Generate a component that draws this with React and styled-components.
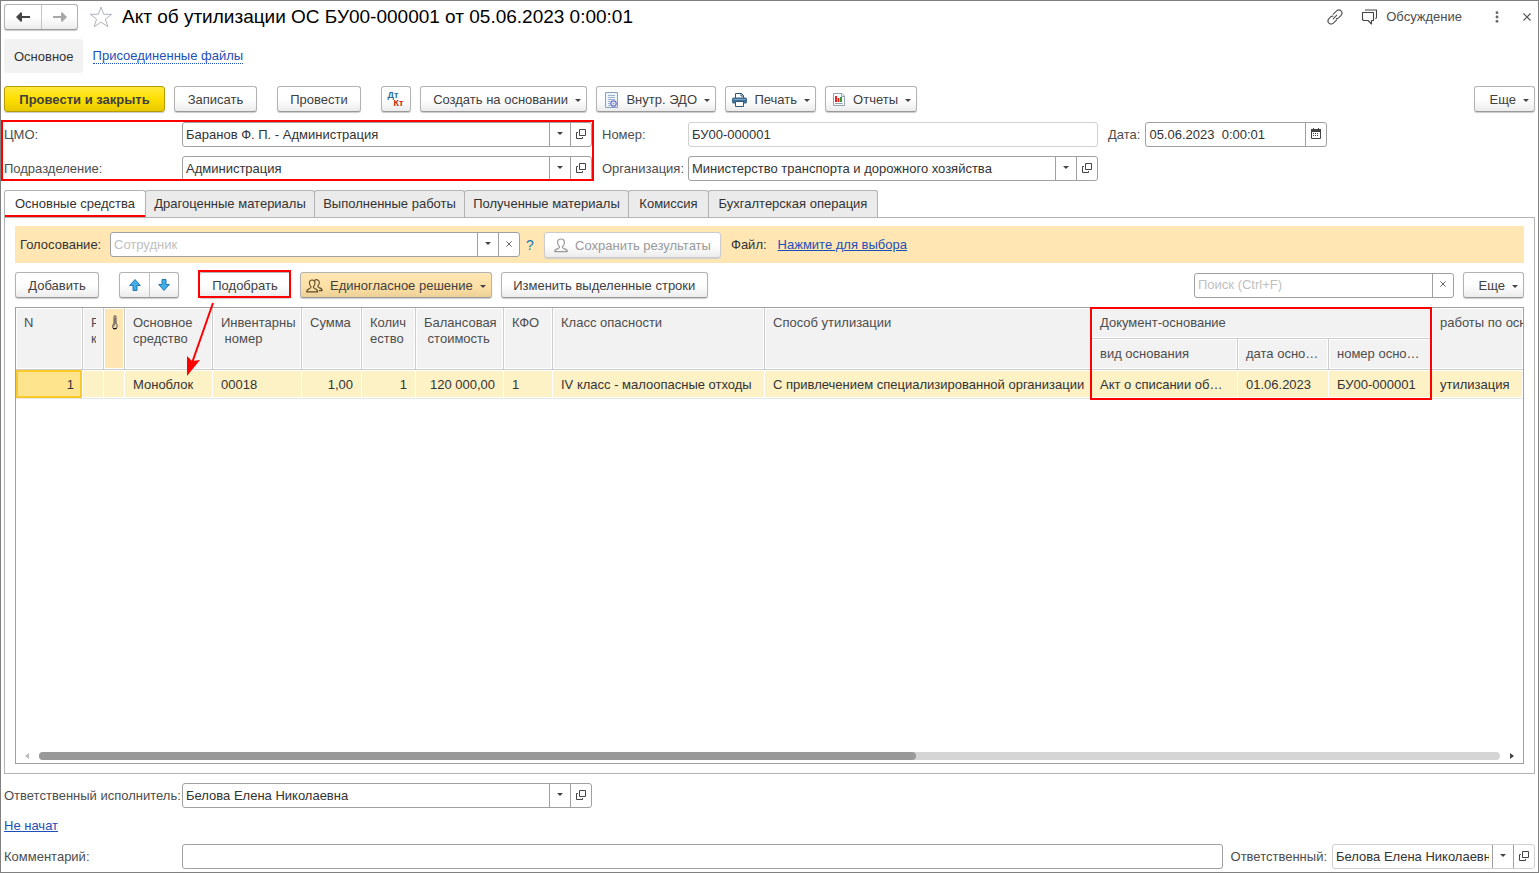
import styled, { createGlobalStyle, css } from 'styled-components';

const colors = {
  text: '#333333',
  label: '#4d4d4d',
  border: '#a0a0a0',
  lightBorder: '#d0d0d0',
  link: '#1d50b8',
  mark: '#ff0000',
  band: '#ffe6b3',
};

const tabs = [
  { title: 'Основные средства', width: 142 },
  { title: 'Драгоценные материалы', width: 170 },
  { title: 'Выполненные работы', width: 151 },
  { title: 'Полученные материалы', width: 165 },
  { title: 'Комиссия', width: 81 },
  { title: 'Бухгалтерская операция', width: 170 },
];

const columnWidths = [67, 21, 21, 88, 89, 60, 54, 88, 49, 212, 327, 146, 91, 103];

/* icons */

function ArrowIcon({ back, color }) {
  return (
    <svg width="16" height="12" viewBox="0 0 16 12" aria-hidden="true">
      <path
        d={back ? 'M1 6L6 1L7 2V5H15V7H7V10L6 11Z' : 'M15 6L10 1L9 2V5H1V7H9V10L10 11Z'}
        fill={color}
      />
    </svg>
  );
}

function StarIcon() {
  return (
    <svg width="24" height="22" viewBox="0 0 24 22" aria-hidden="true">
      <path
        d="M12 1L14.7 8.3H22.8L16.4 13L18.8 20.7L12 16.1L5.2 20.7L7.6 13L1.2 8.3H9.3Z"
        fill="#fff"
        stroke="#b0b6bd"
      />
    </svg>
  );
}

function LinkIcon() {
  return (
    <svg width="16" height="16" viewBox="0 0 16 16" fill="none" stroke="#555" strokeWidth="1.2" strokeLinecap="round" aria-hidden="true">
      <path d="M6.2 9.8L9.8 6.2" />
      <path d="M6.3 5.2L9.6 1.9Q12 0 14.1 1.9Q16 4 14.1 6.4L11.6 8.9Q10.6 9.8 9.4 9.7" />
      <path d="M9.7 10.8L6.4 14.1Q4 16 1.9 14.1Q0 12 1.9 9.6L3.6 7.9Q4.6 7 5.8 7.1" />
    </svg>
  );
}

function ChatIcon() {
  return (
    <svg width="17" height="16" viewBox="0 0 17 16" fill="none" stroke="#444" strokeWidth="1.1" strokeLinejoin="round" aria-hidden="true">
      <path d="M1.5 3.5H12.5V11.5H10.5V15L7.2 11.5H2.5L1.5 10.5Z" />
      <path d="M4 1H15.5V8.5L14.5 10" />
    </svg>
  );
}

function DotsIcon() {
  return (
    <svg width="4" height="12" viewBox="0 0 4 12" fill="#666" aria-hidden="true">
      <circle cx="2" cy="1.7" r="1.4" />
      <circle cx="2" cy="6" r="1.4" />
      <circle cx="2" cy="10.3" r="1.4" />
    </svg>
  );
}

function CrossIcon({ size = 6 }) {
  return (
    <svg width={size} height={size} viewBox="0 0 8 8" stroke="#555" strokeWidth="1.2" aria-hidden="true">
      <path d="M0.5 0.5L7.5 7.5M7.5 0.5L0.5 7.5" />
    </svg>
  );
}

function CaretIcon() {
  return (
    <svg width="6" height="3" viewBox="0 0 6 3" fill="#444" aria-hidden="true">
      <path d="M0 0H6L3 3Z" />
    </svg>
  );
}

function OpenIcon() {
  return (
    <svg width="10" height="10" viewBox="0 0 10 10" fill="none" stroke="#444" aria-hidden="true">
      <path d="M3.5 0.5H9.5V6.5H3.5Z" />
      <path d="M2 3.5H0.5V9.5H6.5V8" />
    </svg>
  );
}

function CalendarIcon() {
  return (
    <svg width="10" height="11" viewBox="0 0 10 11" aria-hidden="true">
      <path d="M0.5 1.5H9.5V10.5H0.5Z" fill="#fff" stroke="#444" />
      <path d="M0 1H10V4H0Z" fill="#444" />
      <path d="M2 0H3V2H2ZM7 0H8V2H7Z" fill="#444" />
      <path d="M2 5.5H8M2 7.5H8" stroke="#444" strokeDasharray="1 1" />
    </svg>
  );
}

function DocIcon() {
  return (
    <svg width="14" height="17" viewBox="0 0 14 17" aria-hidden="true">
      <path d="M0.5 0.5H12.5V15.5H0.5Z" fill="#eef5fa" stroke="#86a3bb" />
      <path d="M3 3.5H10M3 5.5H10M3 7.5H10M3 9.5H5M3 11.5H5M3 13.5H5" stroke="#9db6c9" />
      <circle cx="8.5" cy="11.5" r="2.7" fill="#fff" stroke="#6c6fc8" strokeWidth="1.3" />
      <circle cx="8.5" cy="11.5" r="1" fill="#8e91dd" />
    </svg>
  );
}

function PrinterIcon() {
  return (
    <svg width="15" height="14" viewBox="0 0 15 14" aria-hidden="true">
      <path d="M3.5 5V0.5H9.5L11.5 2.5V5" fill="#fff" stroke="#2d5878" />
      <path d="M9 0.5V3H11.5" fill="none" stroke="#2d5878" />
      <path d="M1.5 4.5H13.5Q15 4.5 15 6V9Q15 10.5 13.5 10.5H1.5Q0 10.5 0 9V6Q0 4.5 1.5 4.5Z" fill="#3d6d94" />
      <path d="M1.5 6.5H13.5" stroke="#7fa6c5" />
      <path d="M3.5 8.5H11.5V13.5H3.5Z" fill="#fff" stroke="#2d5878" />
    </svg>
  );
}

function ReportIcon() {
  return (
    <svg width="13" height="14" viewBox="0 0 13 14" aria-hidden="true">
      <path d="M0.5 0.5H9L11.5 3V12.5H0.5Z" fill="#fff" stroke="#8fa3b0" />
      <path d="M8.5 0.5V3.5H11.5" fill="none" stroke="#8fa3b0" />
      <path d="M2 3H4V9H2Z" fill="#e52222" />
      <path d="M4.5 5H6.5V9H4.5Z" fill="#e52222" />
      <path d="M7 4H9V9H7Z" fill="#28a13a" />
      <path d="M2 10.5H9.5" stroke="#8fa3b0" />
    </svg>
  );
}

function PersonIcon() {
  return (
    <svg width="14" height="15" viewBox="0 0 14 15" fill="none" stroke="#999" strokeWidth="1.2" strokeLinejoin="round" aria-hidden="true">
      <path d="M7 1C4.7 1 3.6 2.6 3.6 4.6C3.6 6.4 4.4 7.8 5.6 8.6Q5.8 10 4 10.6Q0.8 11.4 0.7 13.6H13.3Q13.2 11.4 10 10.6Q8.2 10 8.4 8.6C9.6 7.8 10.4 6.4 10.4 4.6C10.4 2.6 9.3 1 7 1Z" />
    </svg>
  );
}

function PeopleIcon() {
  return (
    <svg width="17" height="14" viewBox="0 0 17 14" fill="none" stroke="#5c4a28" strokeWidth="1.1" strokeLinejoin="round" aria-hidden="true">
      <path d="M6.2 1C4.2 1 3.4 2.3 3.4 4.1C3.4 5.8 4 6.9 5 7.6Q5.2 8.9 3.6 9.6Q0.8 10.6 0.7 12.9H11.7Q11.6 10.6 8.8 9.6Q7.2 8.9 7.4 7.6C8.4 6.9 9 5.8 9 4.1C9 2.3 8.2 1 6.2 1Z" />
      <path d="M8.6 1.5C10.6 -0.2 13.5 1 13.3 3.8C13.2 5.3 12.7 6.4 11.8 7Q11.6 8 13 8.6Q16 9.4 16.2 11.6H13" />
    </svg>
  );
}

function MoveIcon({ down }) {
  return (
    <svg width="12" height="12" viewBox="0 0 12 12" aria-hidden="true">
      <path
        d={down ? 'M4 0.5H8V5.5H11.3L6 11.5L0.7 5.5H4Z' : 'M4 11.5H8V6.5H11.3L6 0.5L0.7 6.5H4Z'}
        fill="#41aeea"
        stroke="#2579ac"
      />
    </svg>
  );
}

function ClipIcon() {
  return (
    <svg width="6" height="15" viewBox="0 0 6 15" fill="none" stroke="#444" strokeWidth="0.9" aria-hidden="true">
      <path d="M2 8V2Q2 0.6 3 0.6Q4 0.6 4 2V8" />
      <path d="M3 3V9L1.5 11.5" />
      <path d="M2 8L0.7 10.5V12.5Q1 14 2.8 14Q5 14 5 12V9.5L4 8" />
      <path d="M1 13.5H4.5" strokeWidth="1.2" stroke="#111" />
    </svg>
  );
}

function ScrollArrow({ right }) {
  return (
    <svg width="4" height="6" viewBox="0 0 4 6" aria-hidden="true">
      <path d={right ? 'M0 0L4 3L0 6Z' : 'M4 0L0 3L4 6Z'} fill={right ? '#444' : '#bbb'} />
    </svg>
  );
}

/* a text box with its drop-down / open / clear buttons */
function Field({
  id, value, placeholder, buttons = [], light, size, ariaLabel,
}) {
  const icons = {
    list: <CaretIcon />,
    open: <OpenIcon />,
    clear: <CrossIcon />,
    calendar: <CalendarIcon />,
  };
  const titles = {
    list: 'Выбрать из списка',
    open: 'Открыть',
    clear: 'Очистить',
    calendar: 'Календарь',
  };

  return (
    <FieldBox $light={light} $size={size}>
      <input id={id} type="text" defaultValue={value} placeholder={placeholder} aria-label={ariaLabel} />
      {buttons.map((name) => (
        <button type="button" key={name} aria-label={titles[name]}>{icons[name]}</button>
      ))}
    </FieldBox>
  );
}

export default function App() {
  return (
    <Window>
      <GlobalStyle />
      <TitleBar>
        <ButtonPair $w={36}>
          <button type="button" aria-label="Назад"><ArrowIcon back color="#444" /></button>
          <button type="button" aria-label="Вперед"><ArrowIcon color="#a8a8a8" /></button>
        </ButtonPair>
        <PlainButton type="button" aria-label="В избранное"><StarIcon /></PlainButton>
        <h1>Акт об утилизации ОС БУ00-000001 от 05.06.2023 0:00:01</h1>
        <TitleActions>
          <PlainButton type="button" aria-label="Ссылка"><LinkIcon /></PlainButton>
          <PlainButton type="button">
            <ChatIcon />
            Обсуждение
          </PlainButton>
          <MenuButton type="button" aria-label="Меню"><DotsIcon /></MenuButton>
          <PlainButton type="button" aria-label="Закрыть"><CrossIcon size={8} /></PlainButton>
        </TitleActions>
      </TitleBar>

      <Sections>
        <span>Основное</span>
        <a href="#files">Присоединенные файлы</a>
      </Sections>

      <Toolbar>
        <Button type="button" $w={161} $kind="primary">Провести и закрыть</Button>
        <Button type="button" $w={83}>Записать</Button>
        <Divider />
        <Button type="button" $w={84}>Провести</Button>
        <Divider />
        <Button type="button" $w={30} aria-label="Дт Кт">
          <DebitCredit>
            <b>Дт</b>
            <b>Кт</b>
          </DebitCredit>
        </Button>
        <Button type="button" $w={167} $menu>
          Создать на основании
          <CaretIcon />
        </Button>
        <Button type="button" $w={120} $menu>
          <DocIcon />
          Внутр. ЭДО
          <CaretIcon />
        </Button>
        <Button type="button" $w={91} $menu>
          <PrinterIcon />
          Печать
          <CaretIcon />
        </Button>
        <Button type="button" $w={92} $menu>
          <ReportIcon />
          Отчеты
          <CaretIcon />
        </Button>
        <Spacer />
        <Button type="button" $w={61} $menu>
          Еще
          <CaretIcon />
        </Button>
      </Toolbar>

      <Form>
        <MarkedGroup>
          <label htmlFor="cmo">ЦМО:</label>
          <Field id="cmo" value="Баранов Ф. П. - Администрация" buttons={['list', 'open']} />
          <label htmlFor="department">Подразделение:</label>
          <Field id="department" value="Администрация" buttons={['list', 'open']} />
        </MarkedGroup>
        <Group>
          <label htmlFor="number">Номер:</label>
          <Field id="number" value="БУ00-000001" light />
          <label htmlFor="organization">Организация:</label>
          <Field id="organization" value="Министерство транспорта и дорожного хозяйства" buttons={['list', 'open']} />
        </Group>
        <DateGroup>
          <label htmlFor="date">Дата:</label>
          <Field id="date" value="05.06.2023  0:00:01" buttons={['calendar']} size={182} />
        </DateGroup>
      </Form>

      <Tabs role="tablist">
        {tabs.map((tab, index) => (
          <Tab type="button" role="tab" key={tab.title} aria-selected={index === 0} $active={index === 0} $w={tab.width}>
            {tab.title}
          </Tab>
        ))}
      </Tabs>

      <Panel role="tabpanel">
        <Voting>
          <label htmlFor="vote">Голосование:</label>
          <Field id="vote" placeholder="Сотрудник" buttons={['list', 'clear']} size={410} />
          <Help type="button">?</Help>
          <Button type="button" disabled $w={177}>
            <PersonIcon />
            Сохранить результаты
          </Button>
          <FileLabel>Файл:</FileLabel>
          <a href="#file">Нажмите для выбора</a>
        </Voting>

        <Toolbar>
          <Button type="button" $w={84}>Добавить</Button>
          <Divider />
          <ButtonPair $w={29}>
            <button type="button" aria-label="Вверх"><MoveIcon /></button>
            <button type="button" aria-label="Вниз"><MoveIcon down /></button>
          </ButtonPair>
          <Divider />
          <Marked>
            <Button type="button" $w={92}>Подобрать</Button>
            <Pointer width="34" height="76" viewBox="0 0 34 76" aria-hidden="true">
              <path d="M26 1L5 61" stroke={colors.mark} strokeWidth="2" />
              <path d="M0 74L0 54L5 59L13 58Z" fill={colors.mark} />
            </Pointer>
          </Marked>
          <Button type="button" $w={191} $menu $kind="accent">
            <PeopleIcon />
            Единогласное решение
            <CaretIcon />
          </Button>
          <Button type="button" $w={207}>Изменить выделенные строки</Button>
          <Spacer />
          <Field ariaLabel="Поиск" placeholder="Поиск (Ctrl+F)" buttons={['clear']} size={260} />
          <Button type="button" $w={61} $menu>
            Еще
            <CaretIcon />
          </Button>
        </Toolbar>

        <Grid>
          <Table>
            <colgroup>
              {columnWidths.map((width, index) => <Col key={index} $w={width} />)}
              <col />
            </colgroup>
            <thead>
              <tr>
                <Th rowSpan={2}>N</Th>
                <Th rowSpan={2}><Cut>{'Р\nк'}</Cut></Th>
                <Th rowSpan={2} $accent aria-label="Файлы"><ClipIcon /></Th>
                <Th rowSpan={2}>{'Основное\nсредство'}</Th>
                <Th rowSpan={2}>{'Инвентарны\n\u00a0номер'}</Th>
                <Th rowSpan={2}>Сумма</Th>
                <Th rowSpan={2}>{'Колич\nество'}</Th>
                <Th rowSpan={2}>{'Балансовая\n\u00a0стоимость'}</Th>
                <Th rowSpan={2}>КФО</Th>
                <Th rowSpan={2}>Класс опасности</Th>
                <Th rowSpan={2}>Способ утилизации</Th>
                <MarkedTh colSpan={3}>Документ-основание</MarkedTh>
                <Th rowSpan={2}>работы по осн</Th>
              </tr>
              <tr>
                <Th>вид основания</Th>
                <Th>дата осно…</Th>
                <Th>номер осно…</Th>
              </tr>
            </thead>
            <tbody>
              <tr>
                <Td $right $selected>1</Td>
                <Td />
                <Td />
                <Td>Моноблок</Td>
                <Td>00018</Td>
                <Td $right>1,00</Td>
                <Td $right>1</Td>
                <Td $right>120 000,00</Td>
                <Td>1</Td>
                <Td>IV класс - малоопасные отходы</Td>
                <Td>С привлечением специализированной организации</Td>
                <Td>Акт о списании об…</Td>
                <Td>01.06.2023</Td>
                <Td>БУ00-000001</Td>
                <Td>утилизация</Td>
              </tr>
            </tbody>
          </Table>
          <ScrollBar>
            <ScrollArrow />
            <div><span /></div>
            <ScrollArrow right />
          </ScrollBar>
        </Grid>
      </Panel>

      <Footer>
        <label htmlFor="executor">Ответственный исполнитель:</label>
        <Field id="executor" value="Белова Елена Николаевна" buttons={['list', 'open']} size={410} />
      </Footer>
      <Footer>
        <a href="#status">Не начат</a>
      </Footer>
      <Footer>
        <label htmlFor="comment">Комментарий:</label>
        <Field id="comment" />
        <OwnerLabel htmlFor="owner">Ответственный:</OwnerLabel>
        <Field id="owner" value="Белова Елена Николаевна" buttons={['list', 'open']} light size={203} />
      </Footer>
    </Window>
  );
}

const GlobalStyle = createGlobalStyle`
    *, *::before, *::after {
        box-sizing: border-box;
    }

    body {
        margin: 0;
        background-color: #ffffff;
    }

    body, button, input {
        font-family: "Liberation Sans", Arial, sans-serif;
        font-size: 13px;
        line-height: 16px;
        color: ${colors.text};
    }

    a {
        color: ${colors.link};
    }

    svg {
        flex: none;
    }
`;

const Window = styled.div`
    min-height: 100vh;
    display: flex;
    flex-direction: column;
    border: 1px solid #808080;
    padding: 3px;

    label {
        color: ${colors.label};
        white-space: nowrap;
    }
`;

const TitleBar = styled.header`
    display: flex;
    align-items: center;
    height: 25px;

    h1 {
        margin: 0 0 0 9px;
        font-size: 19px;
        line-height: 24px;
        font-weight: normal;
        color: #000000;
        white-space: nowrap;
    }
`;

const raised = css`
    border: 1px solid #b3b3b3;
    border-bottom-color: #999999;
    border-radius: 3px;
    background: linear-gradient(#ffffff 50%, #ececec);
    box-shadow: 0 1px 1px #cccccc;
`;

const ButtonPair = styled.div`
    ${raised}
    display: flex;
    height: 26px;

    button {
        width: ${(props) => props.$w}px;
        padding: 0;
        border: none;
        background: none;
        display: flex;
        align-items: center;
        justify-content: center;
    }

    button + button {
        border-left: 1px solid #c4c4c4;
    }
`;

const PlainButton = styled.button`
    border: none;
    background: none;
    padding: 0;
    display: flex;
    align-items: center;
    gap: 8px;
    color: ${colors.label};

    ${ButtonPair} + & {
        margin-left: 11px;
    }
`;

const TitleActions = styled.div`
    margin-left: auto;
    padding-right: 4px;
    display: flex;
    align-items: center;
    gap: 18px;
`;

const MenuButton = styled(PlainButton)`
    margin: 0 6px 0 15px;
`;

const Sections = styled.nav`
    display: flex;
    align-items: center;
    gap: 10px;
    margin-top: 10px;

    span {
        background-color: #f2f2f2;
        border-radius: 3px;
        padding: 10px 9px 8px 10px;
    }

    a {
        text-decoration: none;
        line-height: 14px;
        padding-top: 1px;
        border-bottom: 1px dotted ${colors.link};
    }
`;

const Toolbar = styled.div`
    display: flex;
    align-items: center;
    gap: 9px;
    margin: 13px 0 10px;
`;

const Divider = styled.span`
    width: 2px;
`;

const Spacer = styled.span`
    flex: 1;
`;

const kinds = {
    primary: css`
        border-color: #b39b00;
        background: linear-gradient(#ffe93b, #ffdf00 50%, #e8c900);
        font-weight: bold;
    `,
    accent: css`
        background: linear-gradient(#ffe6b3, #fcdfa5 60%, #ecd097);
    `,
};

const Button = styled.button`
    ${raised}
    height: 26px;
    min-width: ${(props) => props.$w}px;
    padding: 2px 5px 0;
    display: flex;
    align-items: center;
    justify-content: center;
    gap: 7px;
    white-space: nowrap;
    color: #404040;
    ${(props) => props.$menu && 'justify-content: flex-end;'}
    ${(props) => kinds[props.$kind]}

    &:disabled {
        color: #999999;
        border-color: #cccccc;
    }
`;

const DebitCredit = styled.span`
    display: flex;
    flex-direction: column;
    font-size: 9px;
    line-height: 8px;
    padding-bottom: 2px;

    b:first-child {
        color: #2a6a94;
        padding-right: 6px;
    }

    b:last-child {
        color: #c8200c;
        padding-left: 5px;
    }
`;

const FieldBox = styled.div`
    display: flex;
    height: 25px;
    border: 1px solid ${(props) => (props.$light ? colors.lightBorder : colors.border)};
    border-radius: 3px;
    background-color: #ffffff;
    overflow: hidden;
    min-width: 0;
    flex: ${(props) => (props.$size ? `0 1 ${props.$size}px` : '1')};

    input {
        flex: 1;
        min-width: 0;
        border: none;
        outline: none;
        background: none;
        padding: 0 3px;
    }

    input::placeholder {
        color: #c0c0c0;
    }

    button {
        width: 21px;
        padding: 0 0 2px;
        border: none;
        border-left: 1px solid ${colors.border};
        background: none;
        display: flex;
        align-items: center;
        justify-content: center;
    }
`;

const Form = styled.div`
    display: flex;
    align-items: flex-start;
    gap: 10px;
`;

const Group = styled.div`
    display: grid;
    grid-template-columns: 86px minmax(0, 410px);
    row-gap: 9px;
    align-items: center;
`;

const MarkedGroup = styled(Group)`
    position: relative;
    grid-template-columns: 178px minmax(0, 410px);

    &::after {
        content: '';
        position: absolute;
        inset: -2px -2px 0 -3px;
        border: 2px solid ${colors.mark};
        pointer-events: none;
    }
`;

const DateGroup = styled.div`
    display: flex;
    align-items: center;
    gap: 5px;
`;

const Tabs = styled.div`
    display: flex;
    margin-top: 9px;
`;

const Tab = styled.button`
    height: 27px;
    min-width: ${(props) => props.$w}px;
    padding: 0 5px;
    border: 1px solid #b3b3b3;
    border-bottom: none;
    border-radius: 3px 3px 0 0;
    background-color: #ebebeb;
    white-space: nowrap;

    & + & {
        margin-left: -1px;
    }

    ${(props) => props.$active && css`
        background-color: #ffffff;
        box-shadow: inset 0 -2px ${colors.mark};
    `}
`;

const Panel = styled.section`
    flex: 1;
    display: flex;
    flex-direction: column;
    border: 1px solid #b3b3b3;
    padding: 8px 10px 9px;
    margin-bottom: 9px;

    ${Toolbar} {
        margin: 9px 0;
    }
`;

const Voting = styled.div`
    display: flex;
    align-items: center;
    height: 37px;
    padding: 0 5px;
    background-color: ${colors.band};

    label {
        width: 90px;
        color: ${colors.text};
    }
`;

const Help = styled.button`
    width: 24px;
    border: none;
    background: none;
    padding: 0 4px 0 0;
    font-size: 14px;
    color: #1a78b8;
`;

const FileLabel = styled.span`
    margin: 0 11px 0 10px;
`;

const Marked = styled.div`
    position: relative;

    &::after {
        content: '';
        position: absolute;
        inset: -2px 0 0 -1px;
        border: 2px solid ${colors.mark};
        pointer-events: none;
    }
`;

const Pointer = styled.svg`
    position: absolute;
    left: -12px;
    top: 30px;
    z-index: 3;
    pointer-events: none;
`;

const Grid = styled.div`
    flex: 1;
    display: flex;
    flex-direction: column;
    justify-content: space-between;
    border: 1px solid ${colors.border};
    min-height: 200px;
`;

const Table = styled.table`
    width: 100%;
    table-layout: fixed;
    border-collapse: separate;
    border-spacing: 0;
`;

const Col = styled.col`
    width: ${(props) => props.$w}px;
`;

const Th = styled.th`
    height: 31px;
    padding: 7px 0 0 8px;
    border-right: 1px solid #cccccc;
    border-bottom: 1px solid #cccccc;
    box-shadow: inset 0 0 0 1px #ffffff;
    background-color: ${(props) => (props.$accent ? colors.band : '#f2f2f2')};
    color: ${colors.label};
    font-weight: normal;
    text-align: left;
    vertical-align: top;
    white-space: pre;
    overflow: hidden;

    &:last-child[rowspan] {
        border-right: none;
    }
`;

const MarkedTh = styled(Th)`
    position: relative;
    overflow: visible;

    &::after {
        content: '';
        position: absolute;
        left: -2px;
        right: -1px;
        top: -1px;
        height: 93px;
        border: 2px solid ${colors.mark};
        z-index: 2;
        pointer-events: none;
    }
`;

const Cut = styled.div`
    width: 5px;
    overflow: hidden;
`;

const Td = styled.td`
    height: 29px;
    padding: 1px 8px 0;
    border-right: 1px solid #ffffff;
    border-bottom: 1px solid #e5e5e5;
    box-shadow: inset 0 1px #ffffff, inset 0 -1px #ffffff;
    background-color: #fdf1c6;
    text-align: ${(props) => (props.$right ? 'right' : 'left')};
    white-space: nowrap;
    overflow: hidden;

    ${(props) => props.$selected && css`
        background-color: #ffe48e;
        box-shadow: inset 0 0 0 2px #f9c82a;
    `}
`;

const ScrollBar = styled.div`
    display: flex;
    align-items: center;
    gap: 10px;
    padding: 0 9px 3px;

    div {
        flex: 1;
        height: 8px;
        border-radius: 4px;
        background-color: #d5d5d5;
    }

    span {
        display: block;
        width: 60%;
        height: 8px;
        border-radius: 4px;
        background-color: #999999;
    }
`;

const Footer = styled.div`
    display: flex;
    align-items: center;

    & + & {
        margin-top: 10px;
    }

    label:first-child {
        width: 178px;
    }
`;

const OwnerLabel = styled.label`
    margin: 0 5px 0 8px;
`;
